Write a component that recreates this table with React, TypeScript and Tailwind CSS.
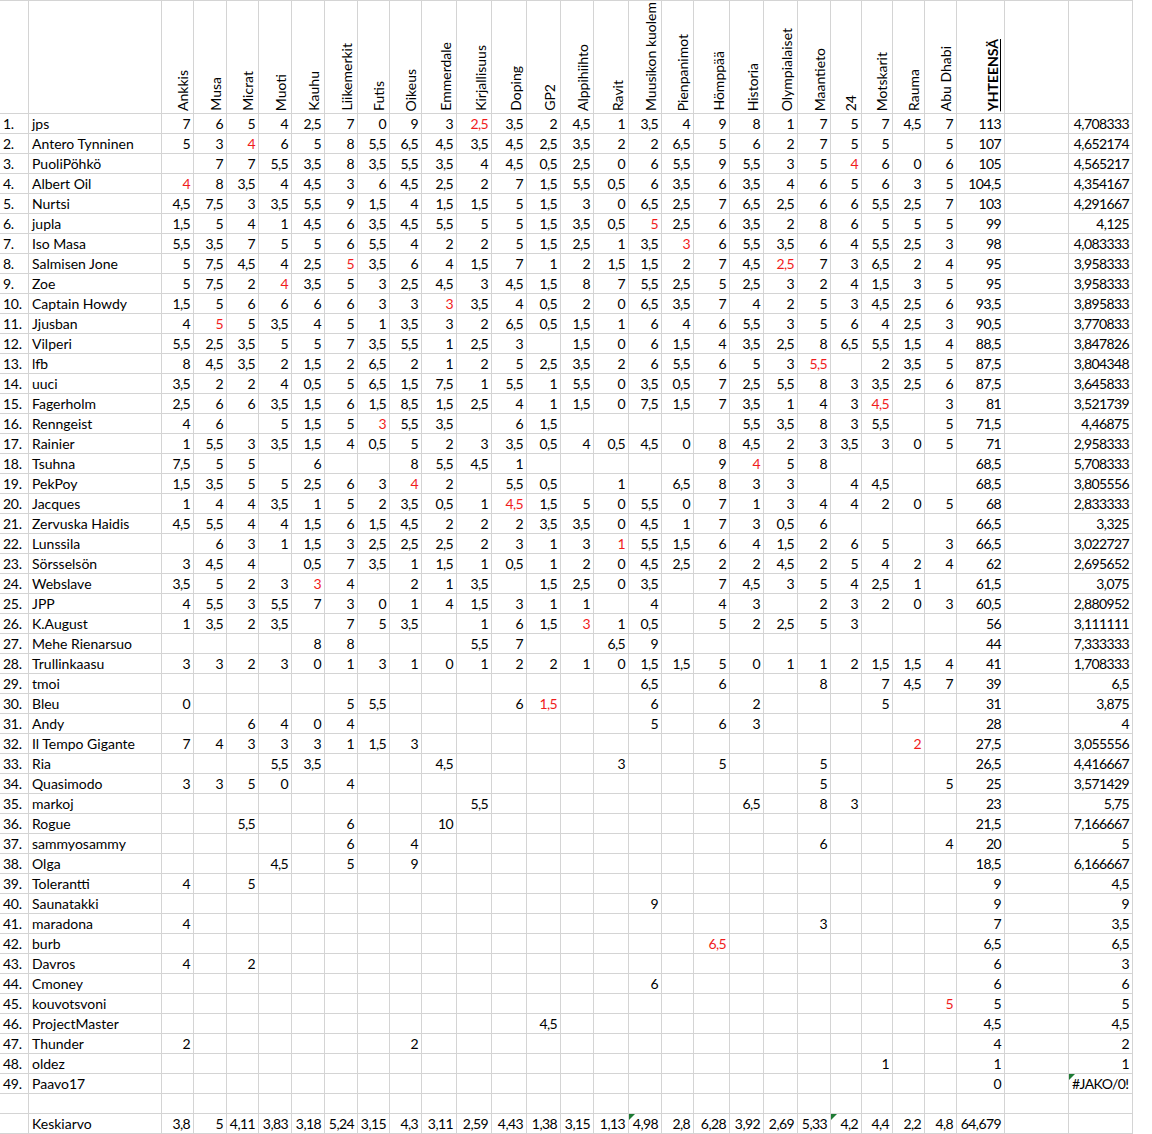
const HEAD = [
  'Ankkis', 'Musa', 'Micrat', 'Muoti', 'Kauhu', 'Liikemerkit', 'Futis', 'Oikeus', 'Emmerdale',
  'Kirjallisuus', 'Doping', 'GP2', 'Alppihiihto', 'Ravit', 'Muusikon kuolem', 'Pienpanimot',
  'Hömppää', 'Historia', 'Olympialaiset', 'Maantieto', '24', 'Motskarit', 'Rauma', 'Abu Dhabi',
]

// sparse row: only a few categories filled
function sp(cells: Record<number, string>, total: string, avg: string) {
  const a: string[] = Array(24).fill('-')
  Object.entries(cells).forEach(([k, v]) => { a[Number(k)] = v })
  return [...a, total, avg].join(' ')
}

// 24 scores, total, average. '-' = empty, '*' = red
const ROWS: [string, string][] = [
  ['jps', '7 6 5 4 2,5 7 0 9 3 *2,5 3,5 2 4,5 1 3,5 4 9 8 1 7 5 7 4,5 7 113 4,708333'],
  ['Antero Tynninen', '5 3 *4 6 5 8 5,5 6,5 4,5 3,5 4,5 2,5 3,5 2 2 6,5 5 6 2 7 5 5 - 5 107 4,652174'],
  ['PuoliPöhkö', '- 7 7 5,5 3,5 8 3,5 5,5 3,5 4 4,5 0,5 2,5 0 6 5,5 9 5,5 3 5 *4 6 0 6 105 4,565217'],
  ['Albert Oil', '*4 8 3,5 4 4,5 3 6 4,5 2,5 2 7 1,5 5,5 0,5 6 3,5 6 3,5 4 6 5 6 3 5 104,5 4,354167'],
  ['Nurtsi', '4,5 7,5 3 3,5 5,5 9 1,5 4 1,5 1,5 5 1,5 3 0 6,5 2,5 7 6,5 2,5 6 6 5,5 2,5 7 103 4,291667'],
  ['jupla', '1,5 5 4 1 4,5 6 3,5 4,5 5,5 5 5 1,5 3,5 0,5 *5 2,5 6 3,5 2 8 6 5 5 5 99 4,125'],
  ['Iso Masa', '5,5 3,5 7 5 5 6 5,5 4 2 2 5 1,5 2,5 1 3,5 *3 6 5,5 3,5 6 4 5,5 2,5 3 98 4,083333'],
  ['Salmisen Jone', '5 7,5 4,5 4 2,5 *5 3,5 6 4 1,5 7 1 2 1,5 1,5 2 7 4,5 *2,5 7 3 6,5 2 4 95 3,958333'],
  ['Zoe', '5 7,5 2 *4 3,5 5 3 2,5 4,5 3 4,5 1,5 8 7 5,5 2,5 5 2,5 3 2 4 1,5 3 5 95 3,958333'],
  ['Captain Howdy', '1,5 5 6 6 6 6 3 3 *3 3,5 4 0,5 2 0 6,5 3,5 7 4 2 5 3 4,5 2,5 6 93,5 3,895833'],
  ['Jjusban', '4 *5 5 3,5 4 5 1 3,5 3 2 6,5 0,5 1,5 1 6 4 6 5,5 3 5 6 4 2,5 3 90,5 3,770833'],
  ['Vilperi', '5,5 2,5 3,5 5 5 7 3,5 5,5 1 2,5 3 - 1,5 0 6 1,5 4 3,5 2,5 8 6,5 5,5 1,5 4 88,5 3,847826'],
  ['lfb', '8 4,5 3,5 2 1,5 2 6,5 2 1 2 5 2,5 3,5 2 6 5,5 6 5 3 *5,5 - 2 3,5 5 87,5 3,804348'],
  ['uuci', '3,5 2 2 4 0,5 5 6,5 1,5 7,5 1 5,5 1 5,5 0 3,5 0,5 7 2,5 5,5 8 3 3,5 2,5 6 87,5 3,645833'],
  ['Fagerholm', '2,5 6 6 3,5 1,5 6 1,5 8,5 1,5 2,5 4 1 1,5 0 7,5 1,5 7 3,5 1 4 3 *4,5 - 3 81 3,521739'],
  ['Renngeist', '4 6 - 5 1,5 5 *3 5,5 3,5 - 6 1,5 - - - - - 5,5 3,5 8 3 5,5 - 5 71,5 4,46875'],
  ['Rainier', '1 5,5 3 3,5 1,5 4 0,5 5 2 3 3,5 0,5 4 0,5 4,5 0 8 4,5 2 3 3,5 3 0 5 71 2,958333'],
  ['Tsuhna', '7,5 5 5 - 6 - - 8 5,5 4,5 1 - - - - - 9 *4 5 8 - - - - 68,5 5,708333'],
  ['PekPoy', '1,5 3,5 5 5 2,5 6 3 *4 2 - 5,5 0,5 - 1 - 6,5 8 3 3 - 4 4,5 - - 68,5 3,805556'],
  ['Jacques', '1 4 4 3,5 1 5 2 3,5 0,5 1 *4,5 1,5 5 0 5,5 0 7 1 3 4 4 2 0 5 68 2,833333'],
  ['Zervuska Haidis', '4,5 5,5 4 4 1,5 6 1,5 4,5 2 2 2 3,5 3,5 0 4,5 1 7 3 0,5 6 - - - - 66,5 3,325'],
  ['Lunssila', '- 6 3 1 1,5 3 2,5 2,5 2,5 2 3 1 3 *1 5,5 1,5 6 4 1,5 2 6 5 - 3 66,5 3,022727'],
  ['Sörsselsön', '3 4,5 4 - 0,5 7 3,5 1 1,5 1 0,5 1 2 0 4,5 2,5 2 2 4,5 2 5 4 2 4 62 2,695652'],
  ['Webslave', '3,5 5 2 3 *3 4 - 2 1 3,5 - 1,5 2,5 0 3,5 - 7 4,5 3 5 4 2,5 1 - 61,5 3,075'],
  ['JPP', '4 5,5 3 5,5 7 3 0 1 4 1,5 3 1 1 - 4 - 4 3 - 2 3 2 0 3 60,5 2,880952'],
  ['K.August', '1 3,5 2 3,5 - 7 5 3,5 - 1 6 1,5 *3 1 0,5 - 5 2 2,5 5 3 - - - 56 3,111111'],
  ['Mehe Rienarsuo', sp({ 4: '8', 5: '8', 9: '5,5', 10: '7', 13: '6,5', 14: '9' }, '44', '7,333333')],
  ['Trullinkaasu', '3 3 2 3 0 1 3 1 0 1 2 2 1 0 1,5 1,5 5 0 1 1 2 1,5 1,5 4 41 1,708333'],
  ['tmoi', sp({ 14: '6,5', 16: '6', 19: '8', 21: '7', 22: '4,5', 23: '7' }, '39', '6,5')],
  ['Bleu', sp({ 0: '0', 5: '5', 6: '5,5', 10: '6', 11: '*1,5', 14: '6', 17: '2', 21: '5' }, '31', '3,875')],
  ['Andy', sp({ 2: '6', 3: '4', 4: '0', 5: '4', 14: '5', 16: '6', 17: '3' }, '28', '4')],
  ['Il Tempo Gigante', sp({ 0: '7', 1: '4', 2: '3', 3: '3', 4: '3', 5: '1', 6: '1,5', 7: '3', 22: '*2' }, '27,5', '3,055556')],
  ['Ria', sp({ 3: '5,5', 4: '3,5', 8: '4,5', 13: '3', 16: '5', 19: '5' }, '26,5', '4,416667')],
  ['Quasimodo', sp({ 0: '3', 1: '3', 2: '5', 3: '0', 5: '4', 19: '5', 23: '5' }, '25', '3,571429')],
  ['markoj', sp({ 9: '5,5', 17: '6,5', 19: '8', 20: '3' }, '23', '5,75')],
  ['Rogue', sp({ 2: '5,5', 5: '6', 8: '10' }, '21,5', '7,166667')],
  ['sammyosammy', sp({ 5: '6', 7: '4', 19: '6', 23: '4' }, '20', '5')],
  ['Olga', sp({ 3: '4,5', 5: '5', 7: '9' }, '18,5', '6,166667')],
  ['Tolerantti', sp({ 0: '4', 2: '5' }, '9', '4,5')],
  ['Saunatakki', sp({ 14: '9' }, '9', '9')],
  ['maradona', sp({ 0: '4', 19: '3' }, '7', '3,5')],
  ['burb', sp({ 16: '*6,5' }, '6,5', '6,5')],
  ['Davros', sp({ 0: '4', 2: '2' }, '6', '3')],
  ['Cmoney', sp({ 14: '6' }, '6', '6')],
  ['kouvotsvoni', sp({ 23: '*5' }, '5', '5')],
  ['ProjectMaster', sp({ 11: '4,5' }, '4,5', '4,5')],
  ['Thunder', sp({ 0: '2', 7: '2' }, '4', '2')],
  ['oldez', sp({ 21: '1' }, '1', '1')],
  ['Paavo17', sp({}, '0', '#JAKO/0!')],
]

const AVG = '3,8 5 4,11 3,83 3,18 5,24 3,15 4,3 3,11 2,59 4,43 1,38 3,15 1,13 4,98 2,8 6,28 3,92 2,69 5,33 4,2 4,4 2,2 4,8 64,679'.split(' ')

const cell = 'h-[20px] border-r border-b border-[#d4d4d4] leading-[19px] whitespace-nowrap'
const head = 'h-[113px] border-r border-b border-[#d4d4d4]'

function Tri() {
  return <span className="absolute left-0 top-0 w-0 h-0 border-t-[6px] border-r-[6px] border-t-[#1e7b34] border-r-transparent" />
}

function Num({ v, tri }: { v: string; tri?: boolean }) {
  const red = v.startsWith('*')
  const txt = v === '-' ? '' : red ? v.slice(1) : v
  return (
    <div className={`${cell} relative overflow-hidden text-right pr-[3px] tracking-[-0.6px] ${red ? 'text-[#f01c1c]' : ''}`}>
      {tri && <Tri />}
      {txt}
    </div>
  )
}

export default function App() {
  return (
    <div className="w-[1152px] bg-white text-black font-['Lato','Liberation_Sans',sans-serif] text-[14px]">
      <div className="w-[1133px] border-t border-[#d4d4d4] grid grid-cols-[29px_133px_32px_33px_32px_33px_33px_33px_32px_32px_35px_35px_35px_34px_33px_35px_33px_32px_36px_34px_34px_33px_31px_31px_32px_32px_48px_64px_64px]">
        {/* header */}
        <div className={head} />
        <div className={head} />
        {HEAD.map(h => (
          <div key={h} className={`${head} flex items-end justify-end pr-[3px] pb-[2px] overflow-hidden`}>
            <span className="[writing-mode:vertical-rl] rotate-180 leading-[15px] whitespace-nowrap">{h}</span>
          </div>
        ))}
        <div className={`${head} flex items-end justify-end pr-[4px] pb-[2px] overflow-hidden`}>
          <span className="[writing-mode:vertical-rl] rotate-180 leading-[15px] whitespace-nowrap font-bold underline">YHTEENSÄ</span>
        </div>
        <div className={head} />
        <div className={head} />

        {/* rows */}
        {ROWS.map(([name, data], i) => {
          const t = data.split(' ')
          const avg = t[25]
          return [
            <div key={`n${i}`} className={`${cell} pl-[3px] tracking-[-0.3px]`}>{i + 1}.</div>,
            <div key={`m${i}`} className={`${cell} pl-[3px] overflow-hidden`}>{name}</div>,
            ...t.slice(0, 25).map((v, j) => <Num key={`c${i}-${j}`} v={v} />),
            <div key={`e${i}`} className={cell} />,
            avg.startsWith('#') ? (
              <div key={`a${i}`} className={`${cell} relative pl-[3px] tracking-[-0.6px]`}><Tri />{avg}</div>
            ) : (
              <Num key={`a${i}`} v={avg} />
            ),
          ]
        })}

        {/* empty row */}
        {Array.from({ length: 29 }).map((_, j) => <div key={`x${j}`} className={cell} />)}

        {/* average row */}
        <div className={cell} />
        <div className={`${cell} pl-[3px]`}>Keskiarvo</div>
        {AVG.map((v, j) => <Num key={`k${j}`} v={v} tri={j === 14 || j === 20} />)}
        <div className={cell} />
        <div className={cell} />
      </div>
    </div>
  )
}
